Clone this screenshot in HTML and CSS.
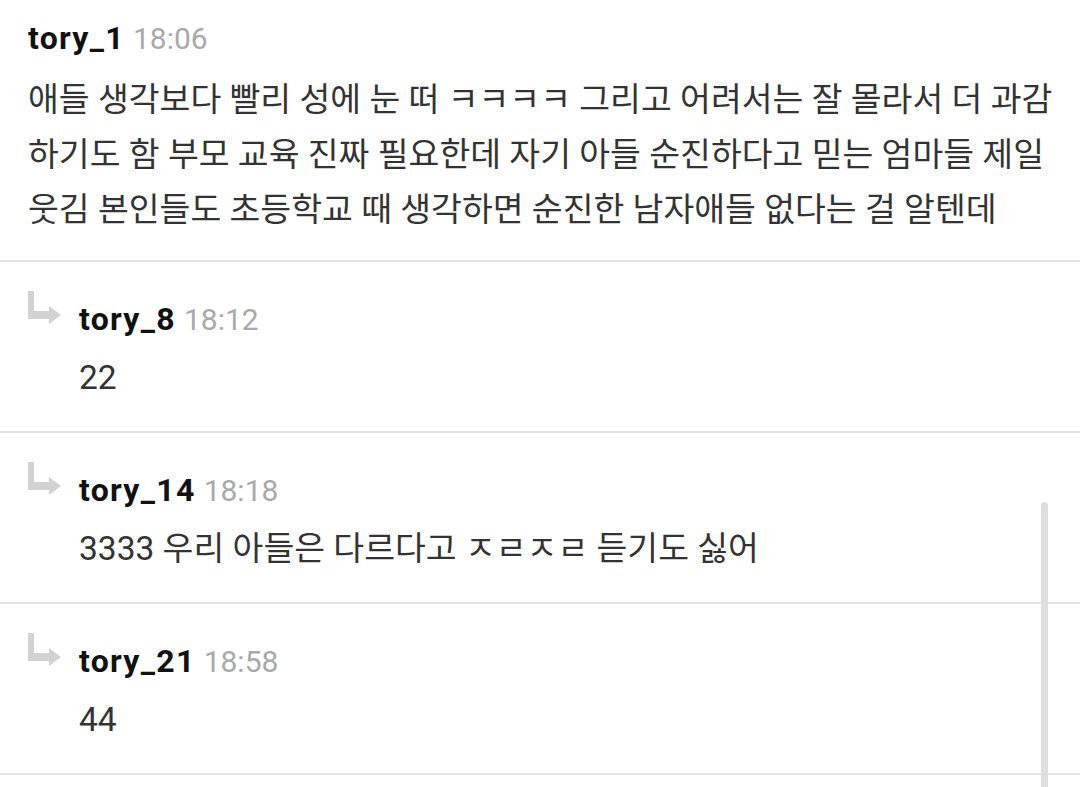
FILE: index.html
```html
<!DOCTYPE html>
<html lang="ko">
<head>
<meta charset="utf-8">
<link rel="stylesheet" href="styles.css">
</head>
<body>
<div class="list">
  <div class="comment">
    <div class="meta"><span class="name">tory_1</span><span class="time">18:06</span></div>
    <div class="body">애들 생각보다 빨리 성에 눈 떠 ㅋㅋㅋㅋ 그리고 어려서는 잘 몰라서 더 과감<br>하기도 함 부모 교육 진짜 필요한데 자기 아들 순진하다고 믿는 엄마들 제일<br>웃김 본인들도 초등학교 때 생각하면 순진한 남자애들 없다는 걸 알텐데</div>
  </div>
  <div class="reply">
    <svg class="arrow" viewBox="0 0 34 34" width="34" height="34"><path d="M0 0H6V20H22V28H0Z"/><path d="M21 15L33 24L21 33Z"/></svg>
    <div class="content">
      <div class="meta"><span class="name">tory_8</span><span class="time">18:12</span></div>
      <div class="body">22</div>
    </div>
  </div>
  <div class="reply">
    <svg class="arrow" viewBox="0 0 34 34" width="34" height="34"><path d="M0 0H6V20H22V28H0Z"/><path d="M21 15L33 24L21 33Z"/></svg>
    <div class="content">
      <div class="meta"><span class="name">tory_14</span><span class="time">18:18</span></div>
      <div class="body">3333 우리 아들은 다르다고 ㅈㄹㅈㄹ 듣기도 싫어</div>
    </div>
  </div>
  <div class="reply">
    <svg class="arrow" viewBox="0 0 34 34" width="34" height="34"><path d="M0 0H6V20H22V28H0Z"/><path d="M21 15L33 24L21 33Z"/></svg>
    <div class="content">
      <div class="meta"><span class="name">tory_21</span><span class="time">18:58</span></div>
      <div class="body">44</div>
    </div>
  </div>
</div>
<div class="scrollbar"></div>
</body>
</html>
```
FILE: styles.css
```css
html, body {
  margin: 0;
  padding: 0;
  background: #ffffff;
  overflow: hidden;
}
body {
  font-family: Roboto, "Noto Sans CJK KR", sans-serif;
  width: 1080px;
  height: 787px;
  position: relative;
}
.list {
  display: flex;
  flex-direction: column;
}
.comment {
  padding: 18px 28px 23px 28px;
  border-bottom: 2px solid #e4e4e4;
}
.meta {
  height: 40px;
  line-height: 40px;
  display: flex;
  align-items: baseline;
  gap: 8px;
  white-space: nowrap;
}
.name {
  font-size: 32px;
  font-weight: 700;
  color: #111111;
  letter-spacing: 1.3px;
}
.time {
  font-size: 30px;
  color: #a9a9a9;
}
.body {
  font-family: Roboto, "Noto Sans CJK KR", sans-serif;
  font-size: 33.5px;
  line-height: 55px;
  color: #333333;
  white-space: nowrap;
}
.comment .body {
  margin-top: 14px;
}
.reply {
  display: flex;
  align-items: flex-start;
  padding: 37px 28px 26px 28px;
  border-bottom: 2px solid #e4e4e4;
  gap: 17px;
}
.arrow {
  fill: #d2d2d2;
  margin-top: -8px;
  flex: none;
}
.content .body {
  margin-top: 11px;
}
.scrollbar {
  position: absolute;
  left: 1041px;
  top: 502px;
  width: 7px;
  height: 300px;
  background: #dedede;
  border-radius: 4px;
}
```
